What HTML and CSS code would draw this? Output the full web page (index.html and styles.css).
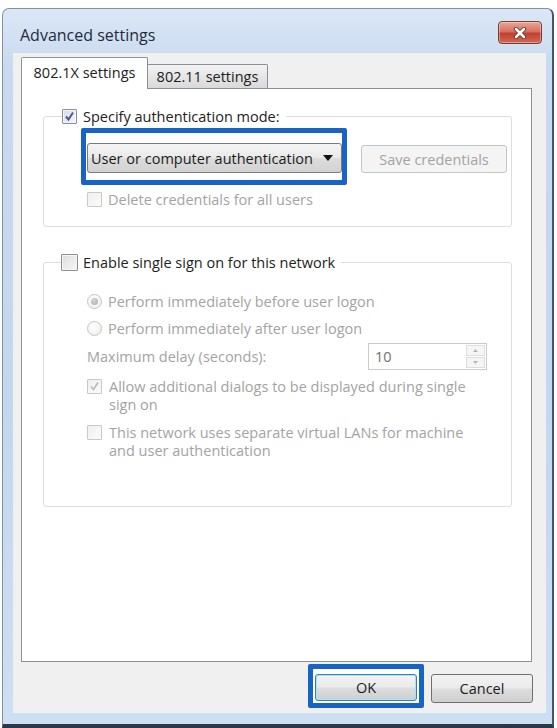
FILE: index.html
```html
<!DOCTYPE html>
<html>
<head>
<meta charset="utf-8">
<title>Advanced settings</title>
<link rel="stylesheet" href="styles.css">
</head>
<body>
<div class="window">
  <div class="titlebar">
    <span class="title">Advanced settings</span>
    <div class="close">
      <svg width="14" height="12" viewBox="0 0 14 12">
        <path d="M3 2 L11 10 M11 2 L3 10" stroke="#6b2a22" stroke-width="4.2" stroke-linecap="round"/>
        <path d="M3 2 L11 10 M11 2 L3 10" stroke="#ffffff" stroke-width="2.6" stroke-linecap="round"/>
      </svg>
    </div>
  </div>
  <div class="client">
    <div class="tabs">
      <div class="tab active">802.1X settings</div>
      <div class="tab">802.11 settings</div>
    </div>
    <div class="panel">
      <fieldset class="group g1">
        <legend class="legend l1"><span class="cb checked"><svg width="11" height="11" viewBox="0 0 11 11"><path d="M2 5.5 L4.5 8.5 L9 1.5" fill="none" stroke="#4a5a93" stroke-width="2"/></svg></span><span class="label">Specify authentication mode:</span></legend>
        <div class="combo-row">
          <div class="highlight hl-combo">
            <div class="combo">
              <span class="combo-text">User or computer authentication</span>
              <svg class="arrow" width="10" height="6" viewBox="0 0 10 6"><path d="M0 0 H10 L5 6 Z" fill="#111"/></svg>
            </div>
          </div>
          <div class="btn disabled save">Save credentials</div>
        </div>
        <div class="row delete-row"><span class="cb dis"></span><span class="dim">Delete credentials for all users</span></div>
      </fieldset>

      <fieldset class="group g2">
        <legend class="legend l2"><span class="cb big"></span><span class="label">Enable single sign on for this network</span></legend>
        <div class="row radio-row first"><span class="radio on"></span><span class="dim">Perform immediately before user logon</span></div>
        <div class="row radio-row"><span class="radio"></span><span class="dim">Perform immediately after user logon</span></div>
        <div class="delay-row">
          <span class="dim">Maximum delay (seconds):</span>
          <div class="spin">
            <span class="spin-val">10</span>
            <div class="spin-btns">
              <div class="spin-btn"><svg width="5" height="3" viewBox="0 0 5 3"><path d="M0 3 L2.5 0 L5 3 Z" fill="#b5b5b5"/></svg></div>
              <div class="spin-btn"><svg width="5" height="3" viewBox="0 0 5 3"><path d="M0 0 L2.5 3 L5 0 Z" fill="#b5b5b5"/></svg></div>
            </div>
          </div>
        </div>
        <div class="row multi allow"><span class="cb dis"><svg width="11" height="11" viewBox="0 0 11 11"><path d="M2 5.5 L4.5 8.5 L9 1.5" fill="none" stroke="#b9b9b9" stroke-width="1.6"/></svg></span><span class="dim">Allow additional dialogs to be displayed during single<br>sign on</span></div>
        <div class="row multi vlan"><span class="cb dis"></span><span class="dim">This network uses separate virtual LANs for machine<br>and user authentication</span></div>
      </fieldset>
    </div>
    <div class="buttons">
      <div class="highlight hl-ok">
        <div class="btn default">OK</div>
      </div>
      <div class="btn cancel">Cancel</div>
    </div>
  </div>
</div>
</body>
</html>
```

FILE: styles.css
```css
* { box-sizing: border-box; }
html, body {
  margin: 0;
  padding: 0;
  background: #ffffff;
}
body {
  font-family: "Open Sans", "Noto Sans", "DejaVu Sans", sans-serif;
  font-size: 14.5px;
  color: #222222;
}
.window {
  margin: 8px 0 0 2px;
  width: 552px;
  height: 720px;
  display: flex;
  flex-direction: column;
  border: 1px solid #7e93aa;
  border-right: 2px solid #44566b;
  border-bottom: 4px solid #2c3846;
  border-radius: 7px 7px 0 0;
  background: linear-gradient(#dbe7f5, #c8daef 60px, #c3d7ee 400px, #cddff2);
  padding: 0 6px 11px 10px;
}
.titlebar {
  height: 44px;
  display: flex;
  align-items: center;
  justify-content: space-between;
  padding: 7px 4px 0 7px;
}
.title {
  font-size: 16px;
  color: #1f2c3e;
}
.close {
  width: 44px;
  height: 23px;
  margin-top: -4px;
  border: 1px solid #7a3b33;
  border-radius: 4px;
  background: linear-gradient(#e9a597, #d8705f 45%, #c2402f 55%, #cf6a56);
  display: flex;
  align-items: center;
  justify-content: center;
  box-shadow: inset 0 0 0 1px rgba(255,255,255,0.35);
}
.client {
  flex: 1;
  display: flex;
  flex-direction: column;
  background: #f0f0f0;
}
.tabs {
  display: flex;
  align-items: flex-end;
  padding: 4px 0 0 8px;
  height: 35px;
}
.tab {
  height: 24px;
  width: 120px;
  border: 1px solid #8d9097;
  border-left: 0;
  border-bottom: 0;
  border-radius: 0 2px 0 0;
  background: linear-gradient(#f3f3f3, #e6e6e6 50%, #d9d9d9);
  display: flex;
  align-items: center;
  justify-content: center;
  color: #222;
  font-size: 14.5px;
}
.tab.active {
  width: 127px;
  height: 32px;
  margin-bottom: -1px;
  border-left: 1px solid #8d9097;
  border-radius: 2px 2px 0 0;
  background: #ffffff;
  position: relative;
  z-index: 1;
  padding-bottom: 2px;
}
.panel {
  flex: 1;
  margin: 0 14px 0 8px;
  background: #ffffff;
  border: 1px solid #8d9097;
  padding: 0 19px 0 21px;
  display: flex;
  flex-direction: column;
}
.group {
  margin: 0;
  border: 1px solid #d9dee3;
  border-radius: 3px;
  min-width: 0;
}
.legend {
  display: flex;
  align-items: center;
  height: 20px;
  padding: 0 6px 0 0;
}
.label { color: #222; }
.dim { color: #a3a3a3; }
.g1 {
  margin-top: 17px;
  padding: 2px 4px 17px 37px;
}
.l1 { margin-left: -19px; }
.l1 .cb { margin-right: 6px; }
.g2 {
  margin-top: 25px;
  padding: 18px 4px 0 43px;
  height: 255px;
}
.l2 { margin-left: -26px; }
.l2 .cb { margin-right: 5px; }

.cb {
  width: 15px;
  height: 15px;
  flex: none;
  border: 1px solid #8f8f8f;
  border-radius: 1px;
  background: linear-gradient(135deg, #dcdcdc, #f8f8f8);
  box-shadow: inset 0 0 0 1px #f4f4f4;
  display: flex;
  align-items: center;
  justify-content: center;
}
.cb.checked {
  background: linear-gradient(135deg, #d7dbe6, #f6f6fa);
  border-color: #8e8f98;
}
.cb.big { width: 17px; height: 17px; }
.cb.dis {
  border-color: #c9c9c9;
  background: linear-gradient(135deg, #efefef, #fbfbfb);
  box-shadow: none;
}
.combo-row {
  display: flex;
  align-items: flex-start;
}
.highlight {
  border: 5px solid #1763c6;
  background: #ffffff;
  border-radius: 2px;
}
.hl-combo {
  width: 266px;
  padding: 10px 0 7px 1px;
}
.combo {
  height: 30px;
  border: 1px solid #7b7b7b;
  border-radius: 3px;
  background: linear-gradient(#f4f4f4, #eaeaea 48%, #dcdcdc 52%, #d2d2d2);
  display: flex;
  align-items: center;
  justify-content: space-between;
  padding: 0 8px 0 3px;
}
.combo-text { color: #1c1c1c; }
.arrow { flex: none; }
.btn {
  display: flex;
  align-items: center;
  justify-content: center;
  border-radius: 3px;
  font-size: 14.5px;
}
.btn.disabled {
  border: 1px solid #c3c6c9;
  background: #f4f4f4;
  color: #a3a3a3;
}
.save {
  width: 146px;
  height: 28px;
  margin: 17px 0 0 14px;
}
.row {
  display: flex;
  align-items: center;
}
.delete-row {
  margin: 5px 0 0 6px;
  height: 19px;
}
.delete-row .cb { margin-right: 6px; }
.radio-row {
  height: 22px;
  margin-top: 5px;
}
.radio-row.first { margin-top: 0; }
.radio {
  width: 15px;
  height: 15px;
  flex: none;
  border-radius: 50%;
  border: 1px solid #c6c6c6;
  background: radial-gradient(circle at 40% 35%, #ffffff, #ececec);
  margin-right: 6px;
  display: flex;
  align-items: center;
  justify-content: center;
}
.radio.on::after {
  content: "";
  width: 7px;
  height: 7px;
  border-radius: 50%;
  background: radial-gradient(circle at 40% 35%, #d6d6d6, #a9a9a9);
}
.delay-row {
  width: 400px;
  height: 27px;
  margin-top: 4px;
  display: flex;
  align-items: center;
  justify-content: space-between;
}
.spin {
  width: 119px;
  height: 27px;
  border: 1px solid #cbcbcb;
  display: flex;
  background: #fff;
}
.spin-val {
  flex: 1;
  padding-left: 6px;
  display: flex;
  align-items: center;
  color: #707070;
}
.spin-btns {
  width: 21px;
  display: flex;
  flex-direction: column;
  gap: 1px;
  padding: 1px;
}
.spin-btn {
  flex: 1;
  border: 1px solid #dedede;
  background: #f5f5f5;
  display: flex;
  align-items: center;
  justify-content: center;
}
.multi {
  align-items: flex-start;
  line-height: 18px;
}
.multi .cb { margin: 1px 7px 0 0; }
.allow { margin-top: 8px; }
.vlan { margin-top: 10px; }

.buttons {
  height: 51px;
  display: flex;
  justify-content: flex-end;
  align-items: flex-start;
  gap: 7px;
  padding: 2px 13px 0 0;
}
.hl-ok {
  width: 116px;
  height: 44px;
  padding: 5px 2px 2px 2px;
}
.btn.default {
  width: 102px;
  height: 27px;
  border: 1px solid #3c7fb1;
  box-shadow: inset 0 0 0 1px #a8e2f6;
  background: linear-gradient(#f2f2f2, #ebebeb 48%, #dddddd 52%, #cfcfcf);
  color: #1c1c1c;
}
.cancel {
  width: 102px;
  height: 29px;
  margin-top: 10px;
  border: 1px solid #707070;
  background: linear-gradient(#f2f2f2, #ebebeb 48%, #dddddd 52%, #cfcfcf);
  color: #1c1c1c;
}
```
